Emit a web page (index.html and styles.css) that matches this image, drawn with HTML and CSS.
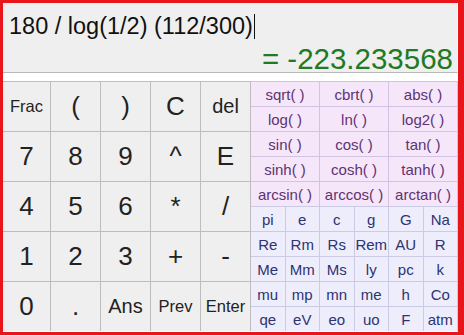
FILE: index.html
```html
<!DOCTYPE html>
<html>
<head>
<meta charset="utf-8">
<link rel="stylesheet" href="styles.css">
</head>
<body>
<div class="frame">
  <div class="display">
    <div class="expr">180 / log(1/2) (112/300)<span class="caret"></span></div>
    <div class="result">= -223.233568</div>
  </div>
  <div class="spacer"></div>
  <div class="pad">
    <div class="keys">
      <div class="key sm">Frac</div>
      <div class="key">(</div>
      <div class="key">)</div>
      <div class="key">C</div>
      <div class="key md">del</div>
      <div class="key">7</div>
      <div class="key">8</div>
      <div class="key">9</div>
      <div class="key">^</div>
      <div class="key">E</div>
      <div class="key">4</div>
      <div class="key">5</div>
      <div class="key">6</div>
      <div class="key">*</div>
      <div class="key">/</div>
      <div class="key">1</div>
      <div class="key">2</div>
      <div class="key">3</div>
      <div class="key">+</div>
      <div class="key">-</div>
      <div class="key">0</div>
      <div class="key">.</div>
      <div class="key md">Ans</div>
      <div class="key sm">Prev</div>
      <div class="key sm">Enter</div>
    </div>
    <div class="side">
      <div class="funcs">
        <div class="fn">sqrt( )</div>
        <div class="fn">cbrt( )</div>
        <div class="fn">abs( )</div>
        <div class="fn">log( )</div>
        <div class="fn">ln( )</div>
        <div class="fn">log2( )</div>
        <div class="fn">sin( )</div>
        <div class="fn">cos( )</div>
        <div class="fn">tan( )</div>
        <div class="fn">sinh( )</div>
        <div class="fn">cosh( )</div>
        <div class="fn">tanh( )</div>
        <div class="fn">arcsin( )</div>
        <div class="fn">arccos( )</div>
        <div class="fn">arctan( )</div>
      </div>
      <div class="consts">
        <div class="cn">pi</div><div class="cn">e</div><div class="cn">c</div><div class="cn">g</div><div class="cn">G</div><div class="cn">Na</div>
        <div class="cn">Re</div><div class="cn">Rm</div><div class="cn">Rs</div><div class="cn">Rem</div><div class="cn">AU</div><div class="cn">R</div>
        <div class="cn">Me</div><div class="cn">Mm</div><div class="cn">Ms</div><div class="cn">ly</div><div class="cn">pc</div><div class="cn">k</div>
        <div class="cn">mu</div><div class="cn">mp</div><div class="cn">mn</div><div class="cn">me</div><div class="cn">h</div><div class="cn">Co</div>
        <div class="cn">qe</div><div class="cn">eV</div><div class="cn">eo</div><div class="cn">uo</div><div class="cn">F</div><div class="cn">atm</div>
      </div>
    </div>
  </div>
</div>
</body>
</html>
```
FILE: styles.css
```css
html, body {
  margin: 0;
  padding: 0;
  background: #ffffff;
}
.frame {
  width: 464px;
  height: 335px;
  box-sizing: border-box;
  border: 3px solid #e8161b;
  border-right-width: 6px;
  display: flex;
  flex-direction: column;
  overflow: hidden;
  font-family: "Liberation Sans", Arial, sans-serif;
  background: #ffffff;
}
.display {
  height: 70px;
  box-sizing: border-box;
  background: #efefef;
  border-bottom: 1px solid #b9b9b9;
  border-right: 1px solid #fafafa;
  padding: 8px 4px 0 6px;
}
.expr {
  font-size: 23.5px;
  line-height: 30px;
  color: #111;
  display: flex;
  align-items: center;
}
.caret {
  display: inline-block;
  width: 1px;
  height: 25px;
  background: #111;
  margin-left: 1px;
}
.result {
  font-size: 29.5px;
  line-height: 30px;
  color: #1f7a25;
  text-align: right;
  margin-top: 3px;
}
.spacer {
  height: 8px;
  background: #ffffff;
}
.pad {
  display: flex;
  height: 250px;
}
.keys {
  display: grid;
  grid-template-columns: 47px 49px 49px 49px 49px;
  grid-template-rows: repeat(5, 49px);
  gap: 1px;
  padding-top: 1px;
  padding-right: 1px;
  background: #bdbdbd;
}
.key {
  background: #efefef;
  color: #222;
  font-size: 26px;
  display: flex;
  align-items: center;
  justify-content: center;
}
.key.md {
  font-size: 20px;
}
.key.sm {
  font-size: 16.5px;
}
.side {
  width: 207px;
  display: flex;
  flex-direction: column;
}
.funcs {
  display: grid;
  grid-template-columns: repeat(3, 1fr);
  grid-template-rows: repeat(5, 24px);
  gap: 1px;
  padding: 1px 1px 0 0;
  background: #d3c3e2;
}
.fn {
  background: #f5e6fa;
  color: #5e3372;
  font-size: 15px;
  display: flex;
  align-items: center;
  justify-content: center;
}
.consts {
  display: grid;
  grid-template-columns: repeat(6, 1fr);
  grid-template-rows: repeat(5, 24px);
  gap: 1px;
  padding: 1px 1px 0 0;
  background: #cccbe6;
}
.cn {
  background: #ededfb;
  color: #2e3372;
  font-size: 15px;
  display: flex;
  align-items: center;
  justify-content: center;
}
```
